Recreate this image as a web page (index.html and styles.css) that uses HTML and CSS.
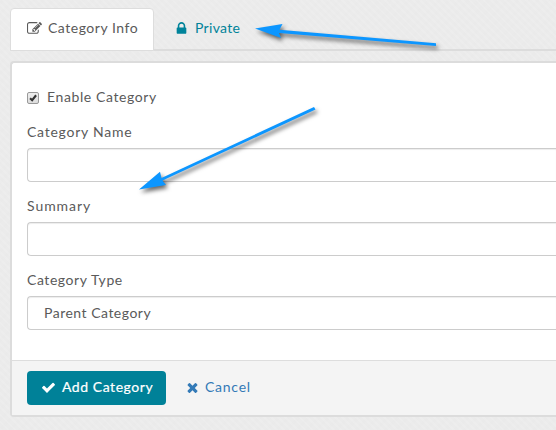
FILE: index.html
```
<!DOCTYPE html>
<html lang="en">
<head>
<meta charset="utf-8">
<title>Category</title>
<link rel="stylesheet" href="styles.css">
</head>
<body>
<nav class="tabs">
  <a class="tab active"><svg class="icon edit" viewBox="0 0 1792 1792"><path d="M888 1184l116-116-152-152-116 116v56h96v96h56zm440-720q-16-16-33 1l-350 350q-17 17-1 33t33-1l350-350q17-17 1-33zm80 594v190q0 119-84.500 203.500t-203.500 84.500h-832q-119 0-203.500-84.500t-84.500-203.500v-832q0-119 84.500-203.500t203.500-84.500h832q63 0 117 25 15 7 18 23 3 17-9 29l-49 49q-14 14-32 8-23-6-45-6h-832q-66 0-113 47t-47 113v832q0 66 47 113t113 47h832q66 0 113-47t47-113v-126q0-13 9-22l64-64q15-15 35-7t20 29zm-96-738l288 288-672 672h-288v-288zm444 132l-92 92-288-288 92-92q28-28 68-28t68 28l152 152q28 28 28 68t-28 68z"/></svg><span class="t-info">Category Info</span></a>
  <a class="tab link"><svg class="icon lock" viewBox="0 0 1792 1792"><path d="M640 768h512v-192q0-106-75-181t-181-75-181 75-75 181v192zm832 96v576q0 40-28 68t-68 28h-960q-40 0-68-28t-28-68v-576q0-40 28-68t68-28h32v-192q0-184 132-316t316-132 316 132 132 316v192h32q40 0 68 28t28 68z"/></svg><span class="t-private">Private</span></a>
</nav>
<form class="panel">
  <div class="body">
    <label class="check"><span class="box"><svg viewBox="0 0 12 12"><path d="M2.500 6.200L5 8.700L9.700 2.700"/></svg></span><span class="t-enable">Enable Category</span></label>
    <label class="label t-name">Category Name</label>
    <div class="field"></div>
    <label class="label t-summary">Summary</label>
    <div class="field"></div>
    <label class="label t-type">Category Type</label>
    <div class="field"><span class="t-parent">Parent Category</span></div>
  </div>
  <div class="footer">
    <a class="button"><svg class="icon tick" viewBox="0 0 1792 1792"><path d="M1671 566q0 40-28 68l-724 724-136 136q-28 28-68 28t-68-28l-136-136-362-362q-28-28-28-68t28-68l136-136q28-28 68-28t68 28l294 295 656-657q28-28 68-28t68 28l136 136q28 28 28 68z"/></svg><span class="t-add">Add Category</span></a>
    <a class="cancel"><svg class="icon times" viewBox="0 0 1792 1792"><path d="M1490 1322q0 40-28 68l-136 136q-28 28-68 28t-68-28l-294-294-294 294q-28 28-68 28t-68-28l-136-136q-28-28-28-68t28-68l294-294-294-294q-28-28-28-68t28-68l136-136q28-28 68-28t68 28l294 294 294-294q28-28 68-28t68 28l136 136q28 28 28 68t-28 68l-294 294 294 294q28 28 28 68z"/></svg><span class="t-cancel">Cancel</span></a>
  </div>
</form>
<svg class="arrows" viewBox="0 0 556 430">
  <path d="M255 28.500L282.500 24L279.500 29.700L436 43.200V46L279 32.900L281 38Z"/>
  <path d="M139 189.500L160 171.800L161.500 178L314 107L315.500 109.500L162.500 180.600L166 185Z"/>
</svg>
</body>
</html>
```
FILE: styles.css
```
* { box-sizing: border-box; }
body {
  margin: 0;
  height: 430px;
  overflow: hidden;
  padding: 8px 0 0 10px;
  font: 14px/20px Lato, "Open Sans", sans-serif;
  color: #5a5a5a;
  background:
    repeating-linear-gradient(45deg, rgba(255,255,255,.1) 0 2px, transparent 2px 5px),
    repeating-linear-gradient(-45deg, rgba(0,0,0,.005) 0 3px, transparent 3px 7px),
    #ebebeb;
}
span, .label { white-space: nowrap; }
.icon { fill: currentColor; flex: none; }
.tabs { display: flex; height: 43px; border-bottom: 2px solid #dcdcdc; }
.tab { display: flex; align-items: center; height: 43px; padding-bottom: 3px; }
.active {
  width: 144px;
  padding-left: 16px;
  background: #fff;
  border: 1px solid #ddd;
  border-radius: 4px 4px 0 0;
}
.link { color: #00839a; padding-left: 20px; }
.edit { width: 15px; height: 15px; margin-right: 6px; }
.lock { width: 15px; height: 15px; margin-right: 6px; }
.panel {
  height: 356px;
  margin: 10px 0 0;
  border: 2px solid #dcdcdc;
  border-right: 0;
  border-radius: 4px 0 0 4px;
  background: #fff;
}
.body { height: 297px; padding: 24px 0 0 15px; }
.check { display: flex; align-items: center; height: 20px; margin-bottom: 15px; }
.box {
  width: 12px; height: 12px;
  margin: 1px 8px 0 0;
  border: 1px solid #999;
  border-radius: 2px;
  background: linear-gradient(#eee, #ddd);
}
.box svg { display: block; width: 10px; height: 10px; fill: none; stroke: #333; stroke-width: 2.5; }
.label { display: block; height: 20px; margin-bottom: 6px; }
.field {
  height: 34px;
  margin-bottom: 14px;
  padding: 6px 16px;
  border: 1px solid #ccc;
  border-right: 0;
  border-radius: 4px 0 0 4px;
  box-shadow: inset 0 1px 1px rgba(0,0,0,.075);
}
.footer {
  display: flex;
  align-items: flex-start;
  height: 55px;
  padding: 10px 0 0 15px;
  background: #f4f4f4;
  border-top: 1px solid #ddd;
}
.button {
  display: flex;
  align-items: center;
  width: 139px;
  height: 34px;
  padding: 0 0 2px 14px;
  border-radius: 4px;
  color: #fff;
  background: #008198;
}
.tick { width: 15px; height: 15px; margin-right: 6px; }
.cancel { display: flex; align-items: center; height: 32px; padding-left: 19px; color: #337ab7; }
.times { width: 15px; height: 15px; margin-right: 5px; }
.t-info { letter-spacing: .52px; }
.t-private { letter-spacing: .3px; }
.t-enable { letter-spacing: .6px; }
.t-name { letter-spacing: .75px; }
.t-summary { letter-spacing: .95px; }
.t-type { letter-spacing: .57px; }
.t-parent { letter-spacing: .5px; }
.t-add { letter-spacing: .55px; -webkit-text-stroke: .2px currentColor; }
.t-cancel { letter-spacing: .75px; }
.arrows {
  position: absolute;
  left: 0; top: 0;
  width: 556px; height: 430px;
  fill: #0c96ff;
  filter: drop-shadow(2px 3px 2px rgba(0,0,0,.6));
  pointer-events: none;
}
```
